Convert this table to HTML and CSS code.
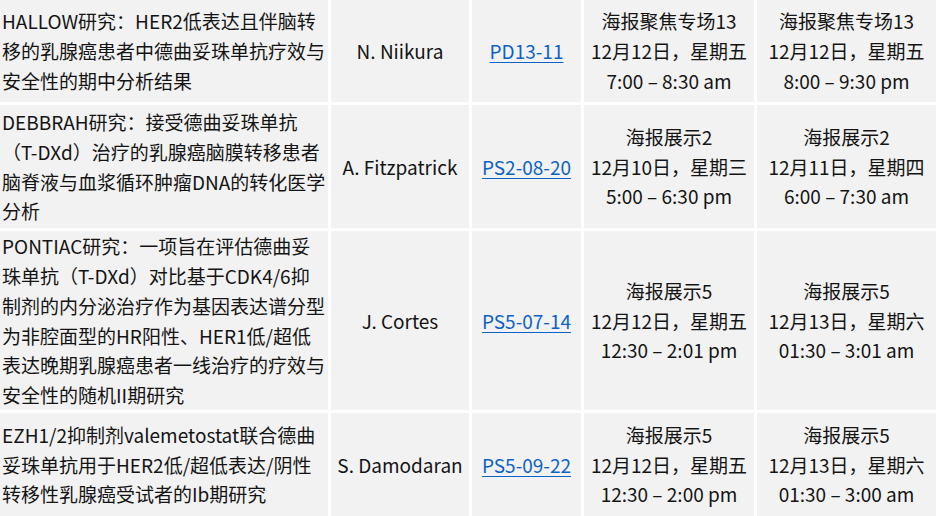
FILE: index.html
```html
<!DOCTYPE html>
<html lang="zh-CN">
<head>
<meta charset="utf-8">
<title>Sessions</title>
<link rel="stylesheet" href="styles.css">
</head>
<body>
<div class="schedule">
  <div class="cell title">HALLOW研究：HER2低表达且伴脑转<br>移的乳腺癌患者中德曲妥珠单抗疗效与<br>安全性的期中分析结果</div>
  <div class="cell">N. Niikura</div>
  <div class="cell"><a class="abs" href="#">PD13-11</a></div>
  <div class="cell">海报聚焦专场13<br>12月12日，星期五<br>7:00 – 8:30 am</div>
  <div class="cell">海报聚焦专场13<br>12月12日，星期五<br>8:00 – 9:30 pm</div>

  <div class="cell title">DEBBRAH研究：接受德曲妥珠单抗<br>（T-DXd）治疗的乳腺癌脑膜转移患者<br>脑脊液与血浆循环肿瘤DNA的转化医学<br>分析</div>
  <div class="cell">A. Fitzpatrick</div>
  <div class="cell"><a class="abs" href="#">PS2-08-20</a></div>
  <div class="cell">海报展示2<br>12月10日，星期三<br>5:00 – 6:30 pm</div>
  <div class="cell">海报展示2<br>12月11日，星期四<br>6:00 – 7:30 am</div>

  <div class="cell title">PONTIAC研究：一项旨在评估德曲妥<br>珠单抗（T-DXd）对比基于CDK4/6抑<br>制剂的内分泌治疗作为基因表达谱分型<br>为非腔面型的HR阳性、HER1低/超低<br>表达晚期乳腺癌患者一线治疗的疗效与<br>安全性的随机II期研究</div>
  <div class="cell">J. Cortes</div>
  <div class="cell"><a class="abs" href="#">PS5-07-14</a></div>
  <div class="cell">海报展示5<br>12月12日，星期五<br>12:30 – 2:01 pm</div>
  <div class="cell">海报展示5<br>12月13日，星期六<br>01:30 – 3:01 am</div>

  <div class="cell title">EZH1/2抑制剂valemetostat联合德曲<br>妥珠单抗用于HER2低/超低表达/阴性<br>转移性乳腺癌受试者的Ib期研究</div>
  <div class="cell">S. Damodaran</div>
  <div class="cell"><a class="abs" href="#">PS5-09-22</a></div>
  <div class="cell">海报展示5<br>12月12日，星期五<br>12:30 – 2:00 pm</div>
  <div class="cell">海报展示5<br>12月13日，星期六<br>01:30 – 3:00 am</div>
</div>
</body>
</html>
```
FILE: styles.css
```css
html, body {
  margin: 0;
  padding: 0;
  background: #ffffff;
  overflow: hidden;
}

.schedule {
  display: grid;
  grid-template-columns: 328px 138px 109px 170px 179px;
  grid-template-rows: 102px 123px 179px 103px;
  gap: 3px;
  font-family: "Noto Sans CJK SC", "Noto Sans", sans-serif;
  font-size: 19px;
  line-height: 29.7px;
  color: #141414;
}

.cell {
  background: #f2f2f2;
  display: flex;
  align-items: center;
  justify-content: center;
  text-align: center;
  white-space: nowrap;
}

.cell.title {
  justify-content: flex-start;
  text-align: left;
  padding-left: 2px;
}

.abs {
  color: #0b63c5;
  text-decoration: underline;
  text-underline-offset: 3px;
}
```
